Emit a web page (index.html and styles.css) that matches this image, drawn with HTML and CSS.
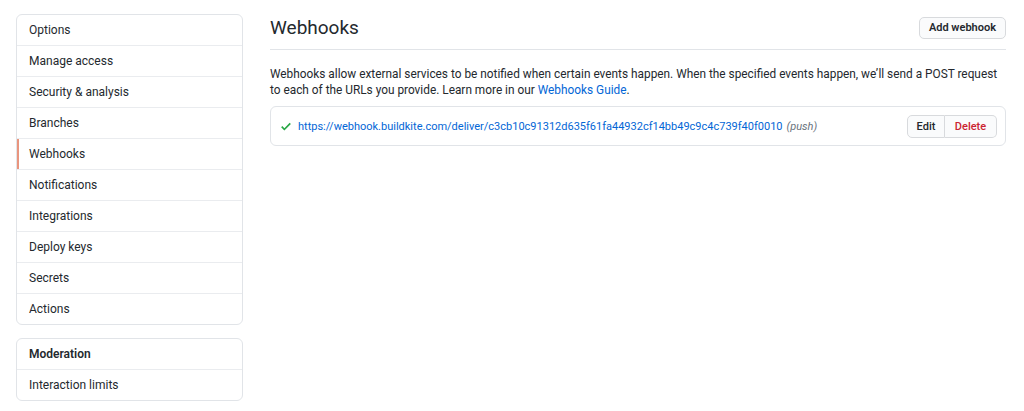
FILE: index.html
```html
<!DOCTYPE html>
<html>
<head>
<meta charset="utf-8">
<link rel="stylesheet" href="styles.css">
</head>
<body>
<div class="layout">
  <aside class="sidebar">
    <nav class="menu">
      <a class="menu-item">Options</a>
      <a class="menu-item">Manage access</a>
      <a class="menu-item">Security &amp; analysis</a>
      <a class="menu-item">Branches</a>
      <a class="menu-item selected">Webhooks</a>
      <a class="menu-item">Notifications</a>
      <a class="menu-item">Integrations</a>
      <a class="menu-item">Deploy keys</a>
      <a class="menu-item">Secrets</a>
      <a class="menu-item last">Actions</a>
    </nav>
    <nav class="menu">
      <div class="menu-heading">Moderation</div>
      <a class="menu-item last">Interaction limits</a>
    </nav>
  </aside>
  <main class="main">
    <div class="subhead">
      <h2 class="subhead-title">Webhooks</h2>
      <button class="btn btn-sm">Add webhook</button>
    </div>
    <p class="desc">Webhooks allow external services to be notified when certain events happen. When the specified events happen, we’ll send a POST request to each of the URLs you provide. Learn more in our <a class="link">Webhooks Guide</a>.</p>
    <div class="hook-box">
      <div class="hook">
        <svg class="check" viewBox="0 0 12 16" width="10" height="13"><path fill="currentColor" fill-rule="evenodd" d="M12 5l-8 8-4-4 1.5-1.5L4 10l6.5-6.5L12 5z"/></svg>
        <a class="hook-url">https://webhook.buildkite.com/deliver/c3cb10c91312d635f61fa44932cf14bb49c9c4c739f40f0010</a>
        <span class="hook-events">(push)</span>
      </div>
      <div class="btn-group">
        <button class="btn btn-sm group-btn">Edit</button>
        <button class="btn btn-sm group-btn danger">Delete</button>
      </div>
    </div>
  </main>
</div>
</body>
</html>
```
FILE: styles.css
```css
* { box-sizing: border-box; }
body {
  margin: 0;
  background: #fff;
  color: #24292e;
  font-family: Roboto, "Liberation Sans", Arial, sans-serif;
  font-size: 12px;
}
.layout {
  display: flex;
  gap: 27px;
  padding: 14px 18px 0 16px;
}
.sidebar {
  width: 227px;
  flex: none;
  display: flex;
  flex-direction: column;
  gap: 13px;
}
.menu {
  border: 1px solid #e1e4e8;
  border-radius: 6px;
  overflow: hidden;
}
.menu-item, .menu-heading {
  display: block;
  height: 31px;
  line-height: 30px;
  padding-left: 12px;
  border-bottom: 1px solid #eaecef;
  color: #24292e;
  font-size: 12px;
  position: relative;
}
.menu-item.last { border-bottom: 0; height: 30px; }
.menu-heading { font-weight: 600; }
.menu-item.selected::before {
  content: "";
  position: absolute;
  left: 0; top: 0; bottom: 0;
  width: 2px;
  background: #e9957e;
}
.main { flex: 1; min-width: 0; }
.subhead {
  display: flex;
  align-items: center;
  justify-content: space-between;
  height: 36px;
  border-bottom: 1px solid #e1e4e8;
}
.subhead-title {
  margin: 0;
  font-size: 19px;
  font-weight: 400;
  margin-top: -8px;
}
.btn {
  font-family: inherit;
  font-size: 11px;
  font-weight: 600;
  color: #24292e;
  background: #fafbfc;
  border: 1px solid #d8dadd;
  border-radius: 5px;
  cursor: pointer;
}
.btn-sm {
  height: 22px;
  padding: 0 9px;
  margin-top: -8px;
}
.desc {
  margin: 16px 0 8px;
  line-height: 16px;
  font-size: 11.85px;
}
.link { color: #0366d6; }
.hook-box {
  display: flex;
  align-items: center;
  justify-content: space-between;
  height: 40px;
  border: 1px solid #e1e4e8;
  border-radius: 6px;
  padding: 0 8px 0 10px;
}
.hook { display: flex; align-items: center; gap: 7px; }
.check { color: #28a745; }
.hook-url { color: #0366d6; font-size: 11px; }
.hook-events { color: #6a737d; font-style: italic; font-size: 11px; margin-left: -3px; }
.btn-group { display: flex; }
.group-btn {
  margin-top: 0;
  height: 23px;
  font-weight: 500;
}
.group-btn:first-child { border-radius: 5px 0 0 5px; width: 38px; padding: 0; }
.group-btn.danger { border-left: 0; border-radius: 0 5px 5px 0; color: #cb2431; width: 52px; padding: 0; }
```
